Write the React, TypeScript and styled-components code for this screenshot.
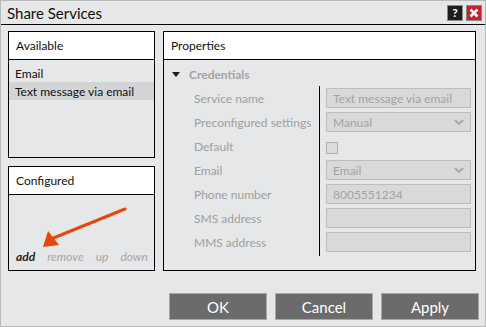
import * as React from 'react';
import styled, { createGlobalStyle } from 'styled-components';

const GlobalStyle = createGlobalStyle`
  body {
    margin: 0;
    background: #ffffff;
    font-family: Lato, "Open Sans", sans-serif;
  }
`;

const Window = styled.div`
  position: relative;
  box-sizing: border-box;
  width: 486px;
  height: 327px;
  border: 1px solid #b9b9b9;
  background: #e6e7e8;
  display: flex;
  flex-direction: column;
`;

const TitleBar = styled.header`
  box-sizing: border-box;
  height: 24px;
  border-bottom: 1px solid #000;
  display: flex;
  align-items: center;
  padding: 0 3px 0 6px;
`;

const Title = styled.h1`
  flex: 1;
  margin: 0;
  font-size: 15px;
  font-weight: 400;
  color: #111;
`;

const TitleButton = styled.span<{ $tone: 'help' | 'close' }>`
  box-sizing: border-box;
  width: 16px;
  height: 16px;
  margin-left: 3px;
  border: 1px solid #8a8a8a;
  background: ${p => (p.$tone === 'help' ? '#1e1e1e' : '#c4212b')};
  color: #fff;
  font-size: 12px;
  font-weight: 700;
  display: flex;
  align-items: center;
  justify-content: center;
  line-height: 1;
`;

const Body = styled.div`
  flex: 1;
  display: flex;
  gap: 8px;
  padding: 6px 9px 0 7px;
`;

const LeftColumn = styled.div`
  width: 149px;
  display: flex;
  flex-direction: column;
  gap: 8px;
`;

const Panel = styled.section<{ $height: number }>`
  position: relative;
  box-sizing: border-box;
  height: ${p => p.$height}px;
  border: 1px solid #000;
  display: flex;
  flex-direction: column;
`;

const PanelHeader = styled.div`
  box-sizing: border-box;
  height: 28px;
  flex: none;
  background: #fff;
  border-bottom: 1px solid #000;
  display: flex;
  align-items: center;
  padding-left: 7px;
  font-size: 12px;
  color: #111;
`;

const ItemList = styled.ul`
  list-style: none;
  margin: 0;
  padding: 4px 0 0;
`;

const Item = styled.li<{ $selected?: boolean }>`
  height: 18px;
  display: flex;
  align-items: center;
  padding-left: 6px;
  font-size: 12px;
  color: #111;
  background: ${p => (p.$selected ? '#d3d4d5' : 'transparent')};
`;

const ActionBar = styled.div`
  margin-top: auto;
  display: flex;
  gap: 12px;
  padding: 0 0 6px 7px;
`;

const Action = styled.span<{ $active?: boolean }>`
  font-size: 12px;
  font-style: italic;
  font-weight: ${p => (p.$active ? 700 : 400)};
  color: ${p => (p.$active ? '#222' : '#a6a6a6')};
`;

const Arrow = styled.svg`
  position: absolute;
  left: 0;
  top: 0;
  pointer-events: none;
`;

const PropsPanel = styled(Panel)`
  flex: 1;
`;

const SectionHead = styled.div`
  display: flex;
  align-items: center;
  height: 24px;
  margin-top: 2px;
  padding-left: 8px;
  gap: 9px;
  font-size: 12px;
  font-weight: 700;
  color: #a3a3a3;
`;

const Caret = styled.span`
  width: 0;
  height: 0;
  border-left: 4px solid transparent;
  border-right: 4px solid transparent;
  border-top: 5px solid #1a1a1a;
`;

const PropGrid = styled.div`
  display: flex;
  padding-left: 30px;
`;

const LabelCol = styled.div`
  width: 125px;
  padding-top: 2px;
`;

const FieldCol = styled.div`
  flex: 1;
  border-left: 1px solid #000;
  padding: 2px 4px 0 6px;
  max-width: 145px;
`;

const Row = styled.div`
  height: 24px;
  display: flex;
  align-items: flex-start;
`;

const Label = styled(Row)`
  align-items: center;
  height: 20px;
  margin-bottom: 4px;
  font-size: 12px;
  white-space: nowrap;
  color: #a0a0a0;
`;

const Field = styled.div`
  box-sizing: border-box;
  width: 145px;
  height: 20px;
  border: 1px solid #bdbdbd;
  background: #d9d9d9;
  display: flex;
  align-items: center;
  padding: 0 6px;
  font-size: 12px;
  color: #a3a3a3;
  white-space: nowrap;
  justify-content: space-between;
`;

const Check = styled.div`
  box-sizing: border-box;
  width: 12px;
  height: 12px;
  margin-top: 6px;
  border: 1px solid #b0b0b0;
  background: #dcdcdc;
`;

const Footer = styled.footer`
  display: flex;
  justify-content: flex-end;
  gap: 8px;
  padding: 21px 6px 6px 0;
`;

const Button = styled.button`
  box-sizing: border-box;
  width: 98px;
  height: 27px;
  border: 1px solid #a8a8a8;
  background: #6b6b6b;
  color: #fff;
  font-family: inherit;
  font-size: 15px;
  padding: 0;
`;

const Chevron = () => (
  <svg width="10" height="6" viewBox="0 0 10 6">
    <path d="M1 1 L5 5 L9 1" fill="none" stroke="#a8a8a8" strokeWidth="1.8" />
  </svg>
);

const labels = [
  'Service name',
  'Preconfigured settings',
  'Default',
  'Email',
  'Phone number',
  'SMS address',
  'MMS address',
];

export default function App() {
  return (
    <>
      <GlobalStyle />
      <Window>
        <TitleBar>
          <Title>Share Services</Title>
          <TitleButton $tone="help">?</TitleButton>
          <TitleButton $tone="close">
            <svg width="10" height="10" viewBox="0 0 10 10">
              <path d="M1.5 1.5 L8.5 8.5 M8.5 1.5 L1.5 8.5" stroke="#fff" strokeWidth="2.6" />
            </svg>
          </TitleButton>
        </TitleBar>
        <Body>
          <LeftColumn>
            <Panel $height={127}>
              <PanelHeader>Available</PanelHeader>
              <ItemList>
                <Item>Email</Item>
                <Item $selected>Text message via email</Item>
              </ItemList>
            </Panel>
            <Panel $height={105}>
              <PanelHeader>Configured</PanelHeader>
              <ActionBar>
                <Action $active>add</Action>
                <Action>remove</Action>
                <Action>up</Action>
                <Action>down</Action>
              </ActionBar>
              <Arrow width="149" height="105" viewBox="0 0 149 105">
                <path d="M116 42 L42 72" stroke="#e8460f" strokeWidth="3" strokeLinecap="round" />
                <path d="M34 80 L39 64 L50 78 Z" fill="#e8460f" />
              </Arrow>
            </Panel>
          </LeftColumn>
          <PropsPanel $height={240}>
            <PanelHeader>Properties</PanelHeader>
            <SectionHead>
              <Caret />
              Credentials
            </SectionHead>
            <PropGrid>
              <LabelCol>
                {labels.map(l => (
                  <Label key={l}>{l}</Label>
                ))}
              </LabelCol>
              <FieldCol>
                <Row><Field>Text message via email</Field></Row>
                <Row><Field>Manual<Chevron /></Field></Row>
                <Row><Check /></Row>
                <Row><Field>Email<Chevron /></Field></Row>
                <Row><Field>8005551234</Field></Row>
                <Row><Field /></Row>
                <Row><Field /></Row>
              </FieldCol>
            </PropGrid>
          </PropsPanel>
        </Body>
        <Footer>
          <Button>OK</Button>
          <Button>Cancel</Button>
          <Button>Apply</Button>
        </Footer>
      </Window>
    </>
  );
}
